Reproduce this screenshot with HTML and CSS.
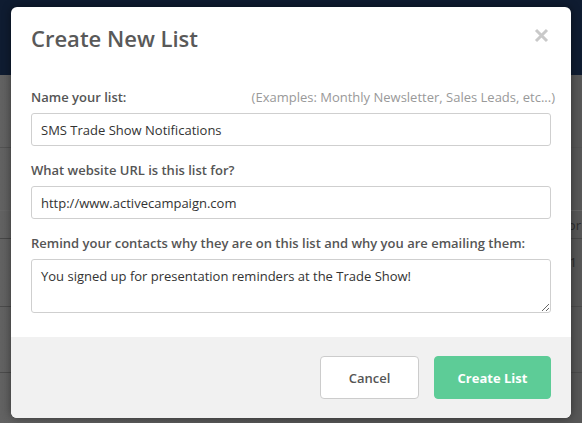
FILE: index.html
```html
<!DOCTYPE html>
<html lang="en">
<head>
<meta charset="utf-8">
<title>Create New List</title>
<link rel="stylesheet" href="styles.css">
</head>
<body>
<div class="page">
  <div class="topbar"></div>
  <div class="bg-row bg-r1"></div>
  <div class="bg-row bg-r2"></div>
  <div class="bg-row bg-r3"><span class="bg-text">or</span></div>
  <div class="bg-row bg-r4"><span class="bg-text bg-num">1</span></div>
  <div class="bg-row bg-r5"></div>
  <div class="bg-row bg-r6"></div>
</div>

<div class="modal">
  <div class="modal-header">
    <h1 class="modal-title">Create New List</h1>
    <button class="close" aria-label="Close">
      <svg width="15" height="15" viewBox="0 0 15 15"><path d="M2 2 L13 13 M13 2 L2 13" stroke="#c9c9c9" stroke-width="3" stroke-linecap="butt"/></svg>
    </button>
  </div>
  <div class="modal-body">
    <div class="label-row">
      <label class="label">Name your list:</label>
      <span class="hint">(Examples: Monthly Newsletter, Sales Leads, etc...)</span>
    </div>
    <input class="field" type="text" value="SMS Trade Show Notifications">

    <div class="label-row spaced">
      <label class="label">What website URL is this list for?</label>
    </div>
    <input class="field" type="text" value="http://www.activecampaign.com">

    <div class="label-row spaced">
      <label class="label">Remind your contacts why they are on this list and why you are emailing them:</label>
    </div>
    <textarea class="field area">You signed up for presentation reminders at the Trade Show!</textarea>
  </div>
  <div class="modal-footer">
    <button class="btn btn-cancel">Cancel</button>
    <button class="btn btn-create">Create List</button>
  </div>
</div>
</body>
</html>
```

FILE: styles.css
```css
html, body {
  margin: 0;
  padding: 0;
}
body {
  width: 582px;
  height: 423px;
  overflow: hidden;
  background: #575757;
  font-family: "Open Sans", "Liberation Sans", sans-serif;
  position: relative;
}
.page {
  display: flex;
  flex-direction: column;
  background: linear-gradient(to right, #626262 0%, #575757 50%, #575757 100%);
  height: 423px;
}
.topbar {
  height: 75px;
  background: #0f1c31;
  flex: none;
}
.bg-row {
  flex: none;
  border-bottom: 1px solid #4b4b4b;
  display: flex;
  align-items: center;
  justify-content: flex-end;
  box-sizing: border-box;
}
.bg-r1 { height: 73px; border-bottom-color: #535353; }
.bg-r2 { height: 63px; border-bottom-color: #666666; }
.bg-r3 { height: 28px; border-bottom-color: #474747; }
.bg-r4 { height: 68px; align-items: flex-start; padding-top: 14px; }
.bg-r5 { height: 66px; }
.bg-r6 { height: 50px; border-bottom: none; }
.bg-text {
  color: #2c2c2c;
  font-size: 13px;
  margin-right: 1px;
}
.bg-num {
  margin-right: 5px;
}

.modal {
  position: absolute;
  top: 7px;
  left: 11px;
  width: 560px;
  height: 411px;
  background: #fff;
  border-radius: 6px;
  box-shadow: 0 0 10px rgba(0, 0, 0, 0.45);
  display: flex;
  flex-direction: column;
  overflow: hidden;
}
.modal-header {
  display: flex;
  justify-content: space-between;
  align-items: flex-start;
  padding: 16px 22px 0 20px;
}
.modal-title {
  margin: 0;
  font-size: 22px;
  line-height: 30px;
  font-weight: 600;
  color: #595959;
}
.close {
  border: none;
  background: none;
  padding: 0;
  margin-top: 5px;
  width: 15px;
  height: 15px;
  display: block;
}
.close svg { display: block; }

.modal-body {
  padding: 35px 20px 0 20px;
  display: flex;
  flex-direction: column;
  flex: 1;
}
.label-row {
  display: flex;
  justify-content: space-between;
  align-items: baseline;
  line-height: 18px;
  margin-bottom: 7px;
}
.label-row.spaced {
  margin-top: 15px;
}
.label {
  font-size: 13px;
  font-weight: 600;
  color: #555;
}
.hint {
  font-size: 13px;
  color: #999;
  margin-right: -4px;
}
.field {
  box-sizing: border-box;
  width: 520px;
  height: 33px;
  border: 1px solid #cfcfcf;
  border-radius: 3px;
  padding: 0 9px;
  font-family: "Open Sans", "Liberation Sans", sans-serif;
  font-size: 13px;
  color: #333;
  background: #fff;
  margin: 0;
  outline: none;
}
.area {
  height: 54px;
  padding: 7px 9px;
  line-height: 18px;
  resize: vertical;
  display: block;
}

.modal-footer {
  flex: none;
  height: 81px;
  box-sizing: border-box;
  background: #f1f1f1;
  display: flex;
  justify-content: flex-end;
  align-items: center;
  gap: 15px;
  padding: 0 20px;
}
.btn {
  height: 43px;
  border-radius: 4px;
  font-family: "Open Sans", "Liberation Sans", sans-serif;
  font-size: 13px;
  font-weight: 600;
  cursor: pointer;
}
.btn-cancel {
  width: 99px;
  background: #fff;
  border: 1px solid #cccccc;
  color: #555;
}
.btn-create {
  width: 117px;
  background: #5dcc97;
  border: 1px solid #5dcc97;
  color: #fff;
  font-weight: 700;
}
```
